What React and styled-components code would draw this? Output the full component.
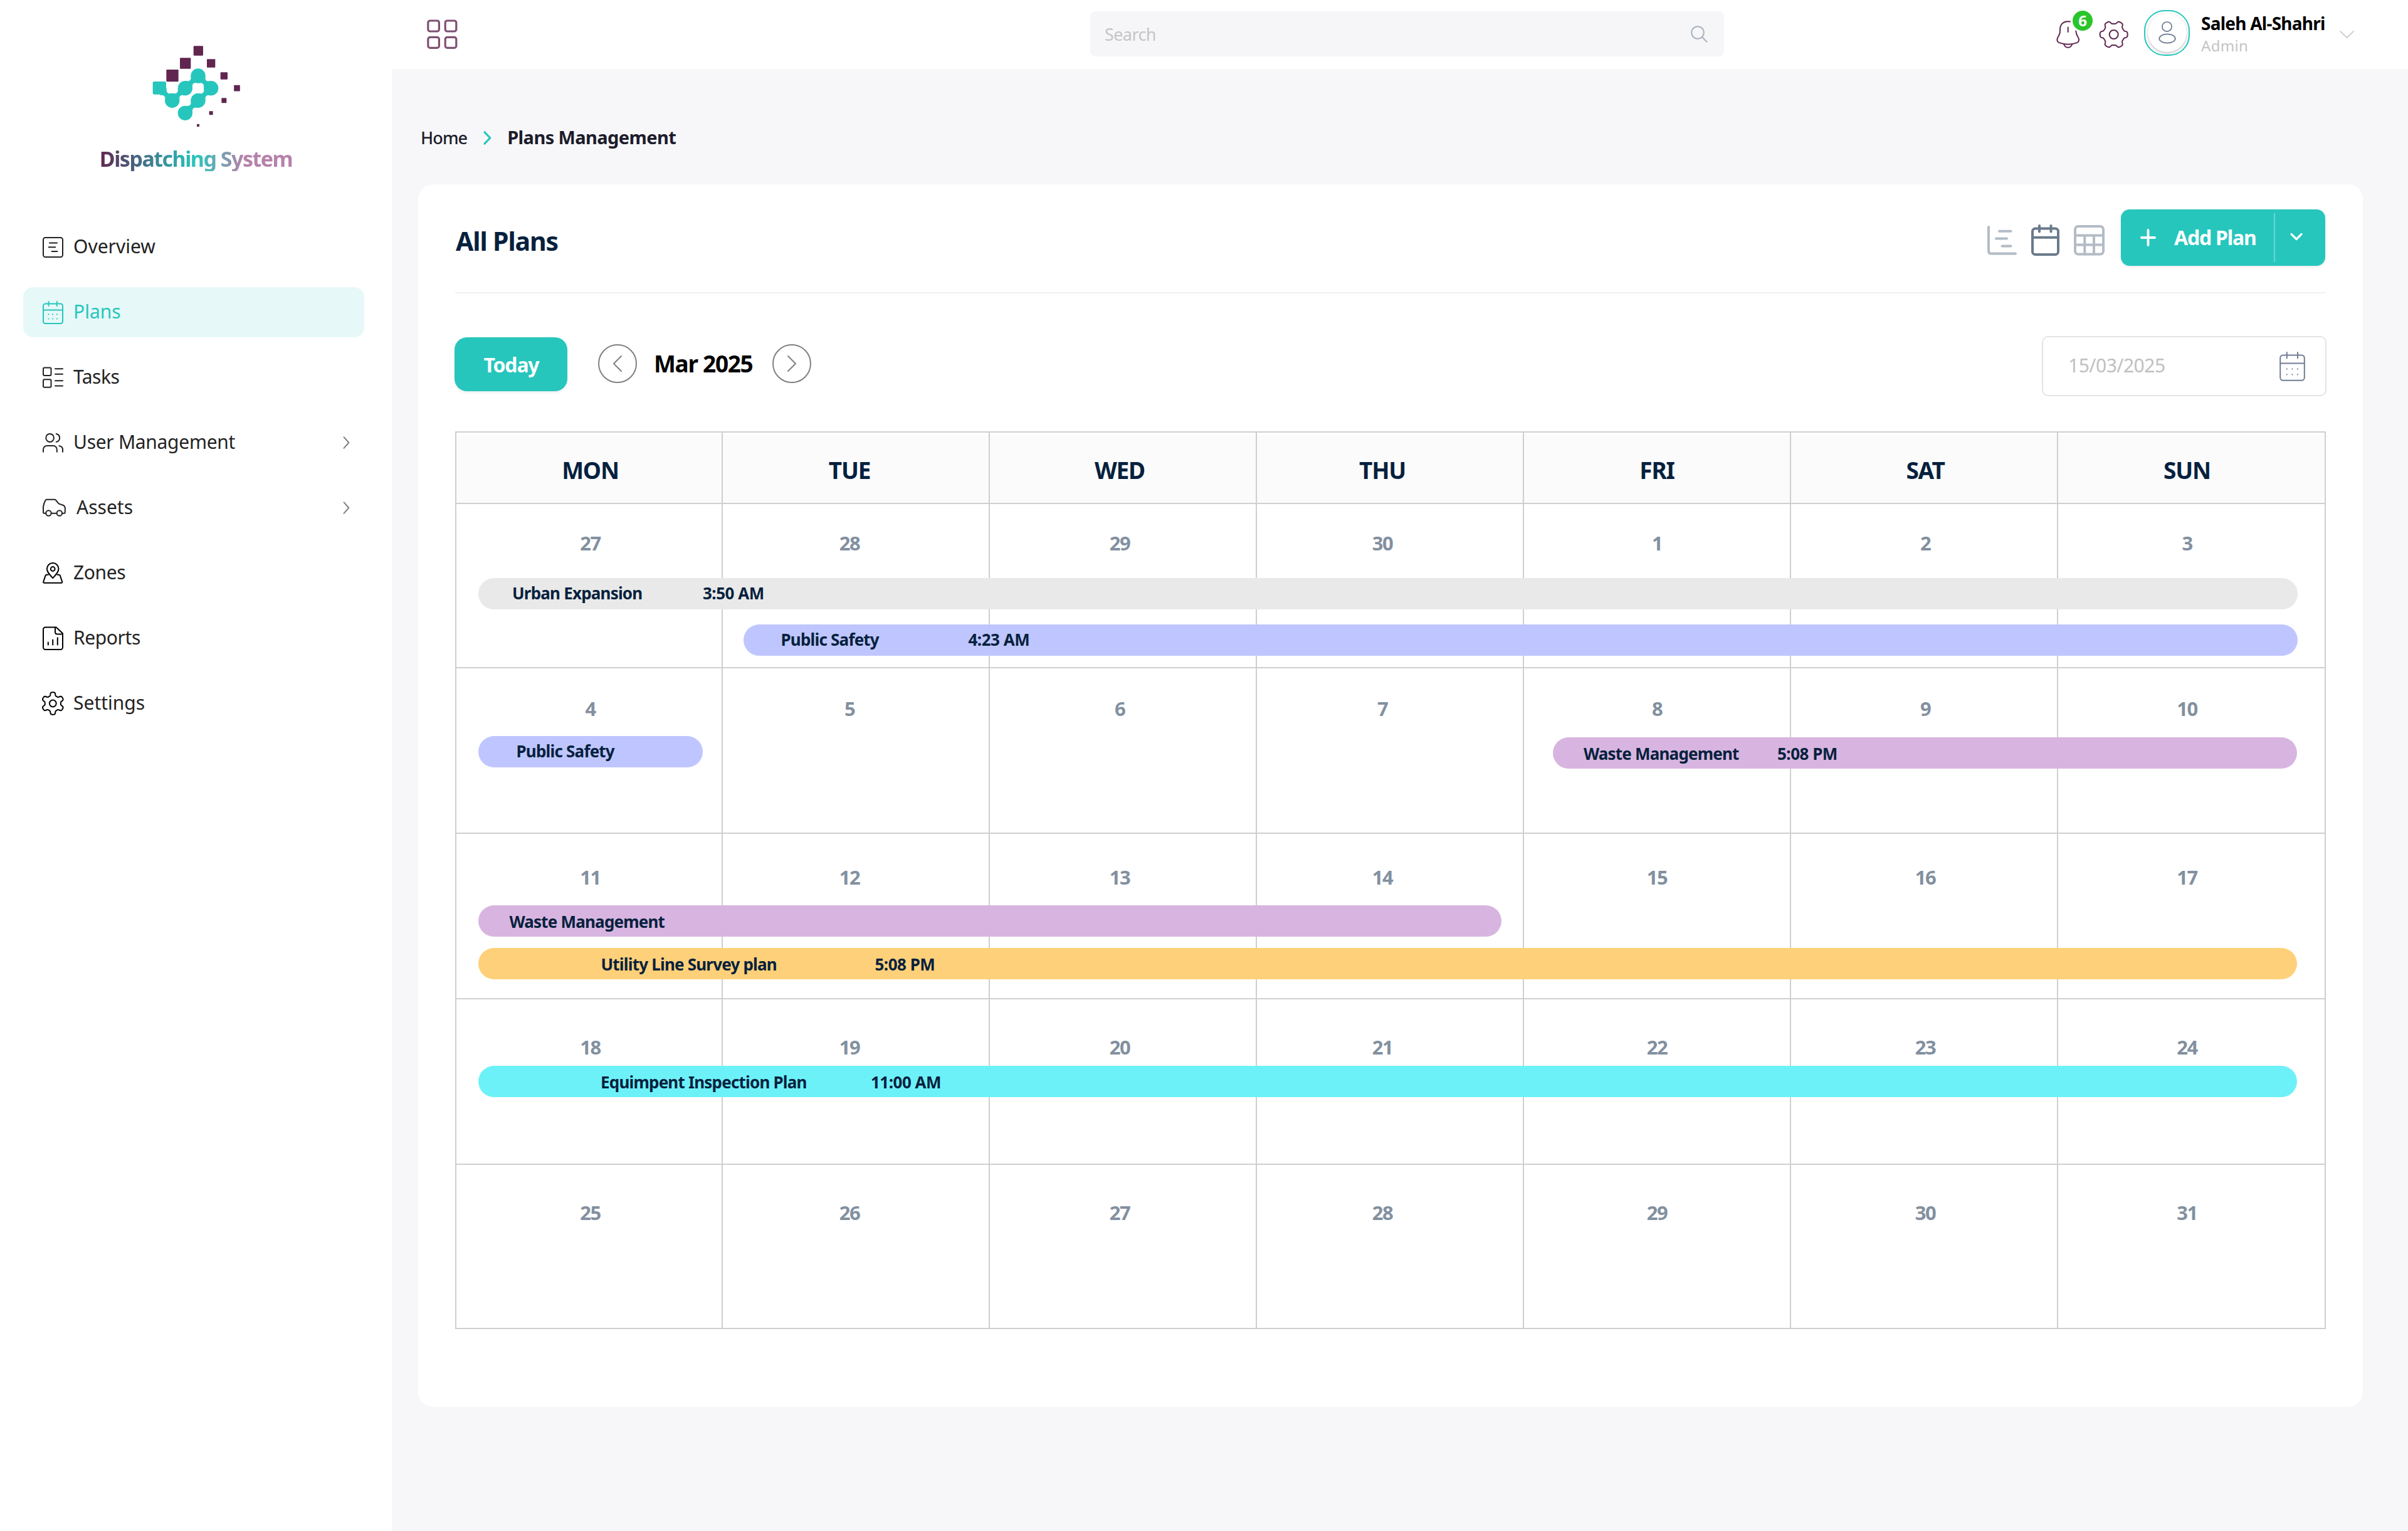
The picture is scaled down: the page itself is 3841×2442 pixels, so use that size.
import React from 'react';
import styled, { createGlobalStyle } from 'styled-components';

const teal = '#26c6bd';
const navy = '#06213d';
const plum = '#602650';
const line = '#cfcfcf';

// outline of a six-tooth cog, sampled round the circle
const gearPath = (cx, cy, outer, inner, turn) => {
  const mid = (outer + inner) / 2;
  const amp = (outer - inner) / 2;
  const pts = [];
  for (let i = 0; i < 180; i++) {
    const a = (i * 2 * Math.PI) / 180;
    const wave = Math.tanh(2.2 * Math.cos(6 * (a - turn))) / Math.tanh(2.2);
    const r = mid + amp * wave;
    pts.push(`${(cx + r * Math.cos(a)).toFixed(2)} ${(cy + r * Math.sin(a)).toFixed(2)}`);
  }
  return `M${pts.join('L')}Z`;
};

/* ---------- icons ---------- */

const Svg = styled.svg`
  display: block;
  flex: none;
  fill: none;
  stroke: currentColor;
  stroke-width: ${p => p.$stroke || 2};
  stroke-linecap: round;
  stroke-linejoin: round;
  overflow: visible;
`;

const NavSvg = ({ w = 34, children }) => (
  <Svg width={w} height="44" viewBox={`0 0 ${w} 44`}>{children}</Svg>
);

const OverviewIcon = () => (
  <NavSvg>
    <rect x="2" y="7" width="31" height="31" rx="3.5" />
    <path d="M12 15.5h12M10.7 22.3h10.6M15.6 29h8.8" />
  </NavSvg>
);

const PlansIcon = () => (
  <NavSvg>
    <rect x="2" y="8.5" width="31" height="31.5" rx="3.5" />
    <path d="M2 18.5h31M10.5 5v7M23.8 5v7" />
    <path strokeWidth="2.2" d="M10.5 25.3h.01M17.1 25.3h.01M23.8 25.3h.01M10.5 32.5h.01M17.1 32.5h.01M23.8 32.5h.01" />
  </NavSvg>
);

const TasksIcon = () => (
  <NavSvg>
    <rect x="2" y="6.5" width="12.5" height="12.5" rx="2" />
    <rect x="2" y="25.3" width="12.5" height="12.5" rx="2" />
    <path d="M21 8.3h12M21 16.8h12M21 27.3h12M21 35.6h12" />
  </NavSvg>
);

const UsersIcon = () => (
  <NavSvg>
    <ellipse cx="12.6" cy="14.4" rx="6.3" ry="6.5" />
    <path d="M22.8 8c3.3.8 5.3 3.4 5.3 6.4s-2 5.7-5.3 6.5" />
    <path d="M2 36.7V33c0-3.4 2.6-6 6-6h9.8c3.4 0 6 2.6 6 6v3.7M27.4 27.2c3.3.5 5.6 2.8 5.6 6v3.5" />
  </NavSvg>
);

const AssetsIcon = () => (
  <NavSvg w={39}>
    <path d="M6.2 30.7H3.6C2.6 30.7 2 30 2 29V20.5C2.6 16.5 3.8 13 5.6 9.8 6 9 6.6 8.7 7.4 8.7H20c.8 0 1.4.3 2 1l4 5c.5.6 1 .9 2 1.2l4.8 1.6c2.6.9 4 2.4 4 5v6.5c0 1-.6 1.7-1.7 1.7H32M14.8 30.7h8.6" />
    <circle cx="10.5" cy="30.5" r="4.2" />
    <circle cx="27.8" cy="30.5" r="4.2" />
  </NavSvg>
);

const ZonesIcon = () => (
  <NavSvg>
    <path d="M17.2 30C12.5 25 7.9 20.6 7.9 15.3a9.3 9.3 0 0 1 18.6 0c0 5.3-4.6 9.7-9.3 14.7z" />
    <circle cx="17.2" cy="15.5" r="3.4" />
    <path d="M9.8 24.7H7.3c-.9 0-1.4.4-1.7 1.2L2.2 36c-.3 1 .3 1.8 1.3 1.8h27.4c1 0 1.6-.8 1.3-1.8L28.8 25.9c-.3-.8-.8-1.2-1.7-1.2h-2.5" />
  </NavSvg>
);

const ReportsIcon = () => (
  <NavSvg>
    <path d="M22.6 4.5H5.5A3.5 3.5 0 0 0 2 8v28.5A3.5 3.5 0 0 0 5.5 40h24a3.5 3.5 0 0 0 3.5-3.5V14.2z" />
    <path d="M21 4.7v7.2c0 2.2 1.3 3.5 3.5 3.5h8.2M9.8 28.6v4M17.2 24.6v8M24.8 21.3v11.3" />
  </NavSvg>
);

const SettingsIcon = () => (
  <NavSvg>
    <path d={gearPath(17.3, 22, 17.8, 12.6, Math.PI / 6)} />
    <circle cx="17.3" cy="22" r="5.4" />
  </NavSvg>
);

const CalendarIcon = () => (
  <Svg width="41" height="47" viewBox="0 0 41 47">
    <rect x="1.2" y="5.5" width="38.6" height="40.3" rx="4.5" />
    <path d="M1.2 18.5h38.6M11.8 1v9.5M29 1v9.5" />
    <path strokeWidth="2.2" d="M11.8 27.5h.01M20.4 27.5h.01M29 27.5h.01M11.8 36.3h.01M20.4 36.3h.01M29 36.3h.01" />
  </Svg>
);

const link = (x, y, angle) => (
  <path
    d="M25 -24Q43 2 61 -24L61 24Q43 -2 25 24Z"
    transform={`translate(${x} ${y}) rotate(${angle})`}
  />
);

const Logo = () => (
  <svg width="200" height="160" viewBox="0 0 600 480">
    <g fill={teal}>
      <rect x="71" y="240" width="64" height="62" rx="7" />
      {[[226, 272], [288, 213], [350, 272], [164, 331], [288, 331], [226, 391]].map(([x, y]) => (
        <circle key={`${x}-${y}`} cx={x} cy={y} r="35" />
      ))}
      {link(103, 272, 44)}
      {link(164, 331, -44)}
      {link(226, 272, -44)}
      {link(288, 213, 44)}
      {link(350, 272, 136)}
      {link(288, 331, 136)}
    </g>
    <g fill={plum}>
      {[[289, 93, 46], [227, 153, 52], [165, 212, 58], [350, 153, 40], [412, 213, 34],
        [474, 272, 29], [412, 331, 24], [350, 391, 18], [288, 450, 12]].map(([x, y, s]) => (
        <rect key={`${x}-${y}`} x={x - s / 2} y={y - s / 2} width={s} height={s} rx={s / 14} />
      ))}
    </g>
  </svg>
);

/* ---------- shell ---------- */

const GlobalStyle = createGlobalStyle`
  * { box-sizing: border-box; }
  body {
    margin: 0;
    background: #f7f7fa;
    font-family: "Noto Sans", "Open Sans", sans-serif;
    color: #222;
  }
  button { border: 0; padding: 0; font: inherit; color: inherit; background: none; }
`;

const Page = styled.div`
  display: flex;
  width: 3841px;
  height: 2442px;
  overflow: hidden;
`;

const Sidebar = styled.aside`
  flex: none;
  width: 625px;
  padding-top: 50px;
  background: #fff;
`;

const Brand = styled.div`
  display: flex;
  flex-direction: column;
  align-items: center;
  padding-left: 14px;
`;

const BrandName = styled.div`
  margin: 23px 14px 81px 0;
  font-size: 34px;
  line-height: 40px;
  font-weight: 700;
  letter-spacing: -1.5px;
  white-space: nowrap;
  color: transparent;
  background: linear-gradient(90deg, ${plum} 0%, #4a5f7d 17%, ${teal} 50%, #b681aa 75%);
  background-clip: text;
`;

const Nav = styled.nav`
  display: flex;
  flex-direction: column;
  gap: 24px;
  padding-left: 37px;
`;

const NavItem = styled.a`
  display: flex;
  align-items: center;
  gap: 16px;
  width: 544px;
  height: 80px;
  padding: 0 23px 0 30px;
  border-radius: 16px;
  color: ${p => (p.$active ? teal : p.$dark ? '#000' : '#222')};
  background: ${p => (p.$active ? '#e6f8f8' : 'transparent')};
`;

const NavLabel = styled.span`
  flex: 1;
  padding-bottom: 3px;
  font-size: 30px;
  line-height: 40px;
  letter-spacing: ${p => p.$track || 0}px;
  color: ${p => (p.$active ? teal : '#222')};
`;

const Main = styled.main`
  flex: 1;
  min-width: 0;
`;

/* ---------- top bar ---------- */

const TopBar = styled.header`
  display: flex;
  align-items: center;
  height: 110px;
  padding: 0 86px 0 56px;
  background: #fff;
`;

const SearchBox = styled.div`
  display: flex;
  align-items: center;
  justify-content: space-between;
  width: 1011px;
  height: 72px;
  margin: 0 0 2px 1009px;
  padding: 0 26px 0 23px;
  border-radius: 8px;
  background: #f6f6f9;
  color: #c5c5c5;
  font-size: 27px;
  letter-spacing: -0.6px;
`;

const UserArea = styled.div`
  display: flex;
  align-items: center;
  margin-left: auto;
  color: ${plum};
`;

const BellWrap = styled.div`
  position: relative;
  margin-right: 31px;
`;

const Badge = styled.span`
  position: absolute;
  left: 26px;
  top: -16px;
  width: 32px;
  height: 32px;
  border-radius: 50%;
  background: #2bc52b;
  color: #fff;
  font-size: 24px;
  font-weight: 700;
  line-height: 31px;
  text-align: center;
`;

const Avatar = styled.div`
  display: grid;
  place-items: center;
  width: 73px;
  height: 73px;
  margin: 0 18px 6px 25px;
  border: 2px solid ${teal};
  border-radius: 33px;
  color: #6b7890;
`;

const AvatarFace = styled.div`
  display: grid;
  place-items: center;
  width: 62px;
  height: 62px;
  border-radius: 50%;
  background: #fff;
  box-shadow: 0 2px 4px rgba(0, 0, 0, 0.22), 0 0 2px rgba(0, 0, 0, 0.08);
`;

const UserText = styled.div`
  width: 221px;
  line-height: 35px;
  white-space: nowrap;
`;

const UserName = styled.div`
  font-size: 28px;
  font-weight: 700;
  letter-spacing: -0.75px;
  color: #000;
`;

const UserRole = styled.div`
  font-size: 24px;
  letter-spacing: 0.3px;
  color: #c4c4c4;
`;

/* ---------- content ---------- */

const Breadcrumb = styled.div`
  display: flex;
  align-items: center;
  height: 184px;
  padding: 36px 0 0 46px;
  color: #1d1c2b;
  line-height: 40px;
  white-space: nowrap;
`;

const Crumb = styled.span`
  font-size: 27px;
  font-weight: 500;
  letter-spacing: -0.9px;
  margin-right: 26px;
`;

const CurrentCrumb = styled.span`
  margin: 0 0 2px 25px;
  font-size: 29px;
  font-weight: 700;
  letter-spacing: -0.6px;
`;

const Card = styled.section`
  width: 3102px;
  height: 1950px;
  margin-left: 42px;
  padding: 0 59px;
  border-radius: 24px;
  background: #fff;
`;

const CardHeader = styled.div`
  display: flex;
  align-items: flex-start;
  height: 174px;
  padding: 40px 1px 0 1px;
  border-bottom: 2px solid #f0f0f0;
`;

const Title = styled.h1`
  flex: 1;
  margin: 26px 0 0;
  font-size: 41px;
  line-height: 48px;
  font-weight: 700;
  letter-spacing: -1.1px;
  color: ${navy};
`;

const Views = styled.div`
  display: flex;
  gap: 23px;
  margin: 24px 26px 0 0;
`;

const ViewButton = styled.button`
  color: ${p => (p.$active ? '#6b7a8c' : '#b3bcc6')};
`;

const AddButton = styled.button`
  display: flex;
  align-items: center;
  width: 326px;
  height: 90px;
  padding-left: 31px;
  border-radius: 14px;
  background: ${teal};
  box-shadow: 0 2px 4px rgba(0, 0, 0, 0.08);
  color: #fff;
`;

const AddLabel = styled.span`
  width: 159px;
  margin-left: 29px;
  font-size: 32px;
  line-height: 40px;
  font-weight: 700;
  letter-spacing: -1.2px;
  text-align: left;
`;

const AddMore = styled.span`
  display: flex;
  align-items: center;
  height: 78px;
  padding-left: 24px;
  border-left: 2px solid rgba(255, 255, 255, 0.3);
`;

const Toolbar = styled.div`
  display: flex;
  justify-content: space-between;
  padding: 68px 0 56px;
  margin: 0 -1px;
`;

const MonthNav = styled.div`
  display: flex;
  align-items: center;
  height: 90px;
`;

const Today = styled.button`
  width: 180px;
  height: 86px;
  margin-right: 49px;
  padding-left: 1px;
  border-radius: 20px;
  background: ${teal};
  box-shadow: 0 2px 4px rgba(0, 0, 0, 0.08);
  color: #fff;
  font-size: 32px;
  font-weight: 700;
  letter-spacing: -1.2px;
`;

const RoundButton = styled.button`
  display: grid;
  place-items: center;
  width: 62px;
  height: 62px;
  margin-bottom: 2px;
  border: 2px solid #808080;
  border-radius: 50%;
  color: #808080;
`;

const Month = styled.div`
  width: 216px;
  padding: 0 0 3px 27px;
  font-size: 37px;
  font-weight: 700;
  letter-spacing: -1.3px;
  color: #000;
  white-space: nowrap;
`;

const DateInput = styled.div`
  display: flex;
  align-items: center;
  justify-content: space-between;
  width: 454px;
  height: 96px;
  padding: 0 32px 0 40px;
  border: 2px solid #e4e4e4;
  border-radius: 10px;
  color: #707d92;
`;

const DateText = styled.span`
  padding-bottom: 3px;
  font-size: 30px;
  letter-spacing: -0.5px;
  color: #c0c0c0;
`;

/* ---------- calendar ---------- */

const Calendar = styled.div`
  border-top: 2px solid ${line};
  border-left: 2px solid ${line};
`;

const Week = styled.div`
  position: relative;
  display: grid;
  grid-template-columns: 425px repeat(5, 426px) 427px;
  height: ${p => p.$height}px;
  border-bottom: 2px solid ${line};
`;

const Cell = styled.div`
  padding-top: ${p => p.$pad}px;
  padding-left: ${p => Math.max(p.$shift, 0) * 2}px;
  padding-right: ${p => Math.max(-p.$shift, 0) * 2}px;
  border-right: 2px solid ${line};
  font-size: 31px;
  font-weight: 700;
  line-height: 40px;
  letter-spacing: -1.6px;
  text-align: center;
  color: #82909f;
`;

const HeadCell = styled(Cell)`
  background: #fbfbfc;
  box-shadow: inset 0 4px #fff;
  font-size: 37px;
  letter-spacing: -1.2px;
  color: ${navy};
`;

const Bar = styled.div`
  position: absolute;
  top: ${p => p.$top}px;
  left: ${p => p.$left}px;
  width: ${p => p.$width}px;
  height: 50px;
  display: flex;
  padding: ${p => p.$drop || 0}px 0 0 ${p => p.$indent}px;
  border-radius: 25px;
  background: ${p => p.$color};
  color: ${navy};
  font-size: 26px;
  line-height: 48px;
  font-weight: 700;
  letter-spacing: -0.8px;
  white-space: nowrap;
`;

const BarTitle = styled.span`
  width: ${p => p.$width}px;
`;

const BarTime = styled.span`
  letter-spacing: -0.5px;
`;

const nav = [
  { label: 'Overview', icon: OverviewIcon },
  { label: 'Plans', icon: PlansIcon, active: true },
  { label: 'Tasks', icon: TasksIcon, track: -0.5 },
  { label: 'User Management', icon: UsersIcon, more: true, track: -0.3 },
  { label: 'Assets', icon: AssetsIcon, more: true },
  { label: 'Zones', icon: ZonesIcon, dark: true, track: -0.4 },
  { label: 'Reports', icon: ReportsIcon, dark: true, track: -0.4 },
  { label: 'Settings', icon: SettingsIcon, dark: true },
];

const days = ['MON', 'TUE', 'WED', 'THU', 'FRI', 'SAT', 'SUN'];
const shifts = [2, -10, -5, -12, 0, 2, -7];

const weeks = [
  {
    height: 262,
    pad: 42,
    dates: [27, 28, 29, 30, 1, 2, 3],
    events: [
      { title: 'Urban Expansion', time: '3:50 AM', color: '#e9e9e9', top: 118, left: 35, width: 2902, indent: 54, titleWidth: 304 },
      { title: 'Public Safety', time: '4:23 AM', color: '#bfc6ff', top: 192, left: 458, width: 2479, indent: 59.5, titleWidth: 299 },
    ],
  },
  {
    height: 264,
    pad: 44,
    dates: [4, 5, 6, 7, 8, 9, 10],
    events: [
      { title: 'Public Safety', color: '#bfc6ff', top: 108, left: 35, width: 358, indent: 60.5 },
      { title: 'Waste Management', time: '5:08 PM', color: '#d8b5e0', top: 110, left: 1749, width: 1187, indent: 49, titleWidth: 309, drop: 2 },
    ],
  },
  {
    height: 264,
    pad: 49,
    dates: [11, 12, 13, 14, 15, 16, 17],
    events: [
      { title: 'Waste Management', color: '#d8b5e0', top: 114, left: 35, width: 1632, indent: 49.5, drop: 2 },
      { title: 'Utility Line Survey plan', time: '5:08 PM', color: '#fed079', top: 182, left: 35, width: 2901, indent: 195.5, titleWidth: 437, drop: 2 },
    ],
  },
  {
    height: 264,
    pad: 56,
    dates: [18, 19, 20, 21, 22, 23, 24],
    events: [
      { title: 'Equimpent Inspection Plan', time: '11:00 AM', color: '#6df1f9', top: 106, left: 35, width: 2901, indent: 195, titleWidth: 431, drop: 2 },
    ],
  },
  { height: 262, pad: 56, dates: [25, 26, 27, 28, 29, 30, 31], events: [] },
];

export default function App() {
  return (
    <Page>
      <GlobalStyle />
      <Sidebar>
        <Brand>
          <Logo />
          <BrandName>Dispatching System</BrandName>
        </Brand>
        <Nav>
          {nav.map(({ label, icon: Icon, active, dark, more, track }) => (
            <NavItem key={label} $active={active} $dark={dark}>
              <Icon />
              <NavLabel $active={active} $track={track}>{label}</NavLabel>
              {more && (
                <Svg width="11" height="20" viewBox="0 0 11 20" color="#808080">
                  <path d="M1.5 1.2L9.3 10 1.5 18.8" />
                </Svg>
              )}
            </NavItem>
          ))}
        </Nav>
      </Sidebar>

      <Main>
        <TopBar>
          <Svg width="49" height="48" viewBox="0 0 49 48" $stroke={3.2} color="#7f5073">
            <rect x="1.8" y="2" width="17.6" height="17" rx="3.2" />
            <rect x="29.2" y="2" width="17.6" height="17" rx="3.2" />
            <rect x="1.8" y="28.4" width="17.6" height="17" rx="3.2" />
            <rect x="29.2" y="28.4" width="17.6" height="17" rx="3.2" />
          </Svg>
          <SearchBox>
            Search
            <Svg width="27" height="27" viewBox="0 0 27 27" color="#aab3bd">
              <circle cx="11" cy="11" r="9.8" />
              <path d="M18 18.2l7.6 7.6" />
            </Svg>
          </SearchBox>
          <UserArea>
            <BellWrap>
              <Svg width="38" height="44" viewBox="0 0 38 44">
                <path d="M22 1.6C11.5-.5 6 6 6 14c0 5 0 6.5-3 11.5C.6 29.500.8 33.5 4 34.900c9 3.4 20.500 3.4 29.500 0 3-1.4 3.500-5.4 1-8.900-2-3.200-3-5.500-3.200-9.500" />
                <path d="M12.2 37.8c1 3.2 3.4 4.9 6.5 4.9s5.5-1.7 6.5-4.9M18.7 10.5V18" />
              </Svg>
              <Badge>6</Badge>
            </BellWrap>
            <Svg width="46" height="44" viewBox="0 0 46 44">
              <path d={gearPath(22.7, 22, 22, 17, 0)} />
              <circle cx="22.7" cy="22" r="7" />
            </Svg>
            <Avatar>
              <AvatarFace>
                <Svg width="28" height="36" viewBox="0 0 28 36" $stroke={1.7}>
                  <circle cx="13.5" cy="8.6" r="7.6" />
                  <ellipse cx="14" cy="27.5" rx="12.8" ry="7.2" />
                </Svg>
              </AvatarFace>
            </Avatar>
            <UserText>
              <UserName>Saleh Al-Shahri</UserName>
              <UserRole>Admin</UserRole>
            </UserText>
            <Svg width="23" height="12" viewBox="0 0 23 12" color="#d0d0d0">
              <path d="M1 1l10.5 10L22 1" />
            </Svg>
          </UserArea>
        </TopBar>

        <Breadcrumb>
          <Crumb>Home</Crumb>
          <Svg width="13" height="22" viewBox="0 0 13 22" $stroke={3.2} color={teal}>
            <path d="M2 1.8l8.8 9.2L2 20.2" />
          </Svg>
          <CurrentCrumb>Plans Management</CurrentCrumb>
        </Breadcrumb>

        <Card>
          <CardHeader>
            <Title>All Plans</Title>
            <Views>
              <ViewButton>
                <Svg width="47" height="50" viewBox="0 0 47 50" $stroke={4}>
                  <path d="M2 4v38.5c0 2.5 1.5 4 4 4H45M19 10.7h18.5M14 22.6h17M23.5 34.5h14" />
                </Svg>
              </ViewButton>
              <ViewButton $active>
                <Svg width="45" height="50" viewBox="0 0 45 50" $stroke={4}>
                  <rect x="2" y="6.5" width="41" height="41.5" rx="4.5" />
                  <path d="M2 20.7h41M13 2v9.5M31.5 2v9.5" />
                </Svg>
              </ViewButton>
              <ViewButton>
                <Svg width="49" height="50" viewBox="0 0 49 50" $stroke={4}>
                  <rect x="2" y="3" width="45" height="44.5" rx="5" />
                  <path d="M2 17.5h45M2 32.6h45M17.3 17.5v30M32 17.5v30" />
                </Svg>
              </ViewButton>
            </Views>
            <AddButton>
              <Svg width="25" height="28" viewBox="0 0 25 28" $stroke={3.8}>
                <path d="M12.5 2v24M2 14h21" />
              </Svg>
              <AddLabel>Add Plan</AddLabel>
              <AddMore>
                <Svg width="20" height="18" viewBox="0 0 20 18" $stroke={3.2}>
                  <path d="M2 3.5l8 8 8-8" />
                </Svg>
              </AddMore>
            </AddButton>
          </CardHeader>

          <Toolbar>
            <MonthNav>
              <Today>Today</Today>
              <RoundButton>
                <Svg width="14" height="26" viewBox="0 0 14 26">
                  <path d="M13 1L1 13l12 12" />
                </Svg>
              </RoundButton>
              <Month>Mar 2025</Month>
              <RoundButton>
                <Svg width="14" height="26" viewBox="0 0 14 26">
                  <path d="M1 1l12 12L1 25" />
                </Svg>
              </RoundButton>
            </MonthNav>
            <DateInput>
              <DateText>15/03/2025</DateText>
              <CalendarIcon />
            </DateInput>
          </Toolbar>

          <Calendar>
            <Week $height={114}>
              {days.map((day, i) => (
                <HeadCell key={day} $pad={40} $shift={shifts[i]}>{day}</HeadCell>
              ))}
            </Week>
            {weeks.map(week => (
              <Week key={week.dates[0]} $height={week.height}>
                {week.dates.map((date, i) => (
                  <Cell key={date} $pad={week.pad} $shift={shifts[i]}>{date}</Cell>
                ))}
                {week.events.map(e => (
                  <Bar
                    key={e.title}
                    $top={e.top}
                    $left={e.left}
                    $width={e.width}
                    $indent={e.indent}
                    $drop={e.drop}
                    $color={e.color}
                  >
                    <BarTitle $width={e.titleWidth}>{e.title}</BarTitle>
                    {e.time && <BarTime>{e.time}</BarTime>}
                  </Bar>
                ))}
              </Week>
            ))}
          </Calendar>
        </Card>
      </Main>
    </Page>
  );
}
